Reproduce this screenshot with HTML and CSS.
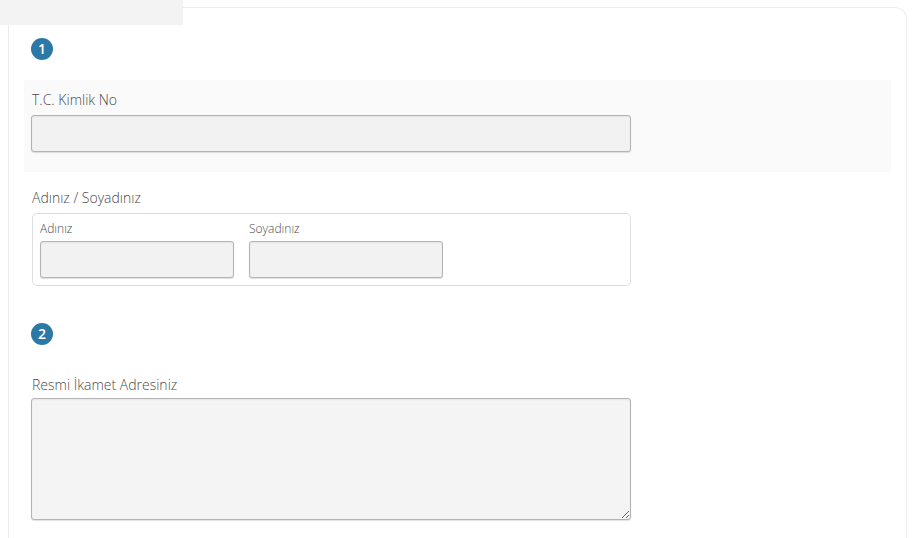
FILE: index.html
```html
<!DOCTYPE html>
<html lang="tr">
<head>
<meta charset="utf-8">
<title>Form</title>
<link rel="stylesheet" href="styles.css">
</head>
<body>
<div class="page">
  <div class="tab"></div>
  <div class="card">
    <div class="step">1</div>
    <div class="section shaded">
      <label class="label">T.C. Kimlik No</label>
      <input class="field wide" type="text">
    </div>
    <div class="section">
      <div class="label">Adınız / Soyadınız</div>
      <div class="group">
        <div class="sub">
          <label class="sublabel">Adınız</label>
          <input class="field half" type="text">
        </div>
        <div class="sub">
          <label class="sublabel">Soyadınız</label>
          <input class="field half" type="text">
        </div>
      </div>
    </div>
    <div class="step step2">2</div>
    <div class="section">
      <label class="label">Resmi İkamet Adresiniz</label>
      <textarea class="field area"></textarea>
    </div>
  </div>
</div>
</body>
</html>
```

FILE: styles.css
```css
html, body {
  margin: 0;
  padding: 0;
  background: #ffffff;
}
body {
  font-family: "Open Sans", "Noto Sans", sans-serif;
  font-weight: 300;
  color: #555;
  overflow: hidden;
}
.page {
  position: relative;
  width: 907px;
  padding: 7px 0 0 8px;
  box-sizing: border-box;
}
.tab {
  position: absolute;
  left: 0;
  top: 0;
  width: 183px;
  height: 25px;
  background: #f3f3f3;
}
.card {
  border: 1px solid #ececec;
  border-bottom: none;
  border-radius: 0 12px 0 0;
  padding: 30px 15px 20px 15px;
  height: 540px;
  box-sizing: border-box;
}
.step {
  width: 22px;
  height: 22px;
  border-radius: 50%;
  background: #2c79a8;
  color: #fff;
  font-size: 14px;
  font-weight: 600;
  line-height: 22px;
  text-align: center;
  margin-left: 7px;
}
.step2 {
  margin-top: 37px;
}
.section {
  padding: 0 7px;
  display: flex;
  flex-direction: column;
  align-items: flex-start;
}
.shaded {
  background: #fafafa;
  margin-top: 20px;
  padding-top: 10px;
  padding-bottom: 20px;
  margin-bottom: 16px;
}
.label {
  font-size: 14px;
  line-height: 20px;
  color: #4a4a4a;
  margin-bottom: 5px;
  margin-left: 1px;
}
.field {
  box-sizing: border-box;
  background: #f2f2f2;
  border: 1px solid #b3b3b3;
  border-radius: 3px;
  box-shadow: inset 0 1px 2px rgba(0,0,0,0.06), 0 1px 1px rgba(0,0,0,0.12);
  margin: 0;
  font-family: inherit;
}
.wide {
  width: 600px;
  height: 37px;
}
.group {
  width: 599px;
  height: 73px;
  box-sizing: border-box;
  border: 1px solid #dedede;
  border-radius: 5px;
  margin-left: 1px;
  padding: 6px 7px 0 7px;
  display: flex;
  gap: 15px;
}
.sub {
  display: flex;
  flex-direction: column;
}
.sublabel {
  font-size: 12px;
  line-height: 17px;
  color: #4a4a4a;
  margin-bottom: 4px;
}
.half {
  width: 194px;
  height: 37px;
}
.step2 + .section .label {
  margin-top: 30px;
  margin-bottom: 3px;
}
.area {
  width: 600px;
  height: 122px;
  background: #f4f4f4;
  resize: both;
}
```
